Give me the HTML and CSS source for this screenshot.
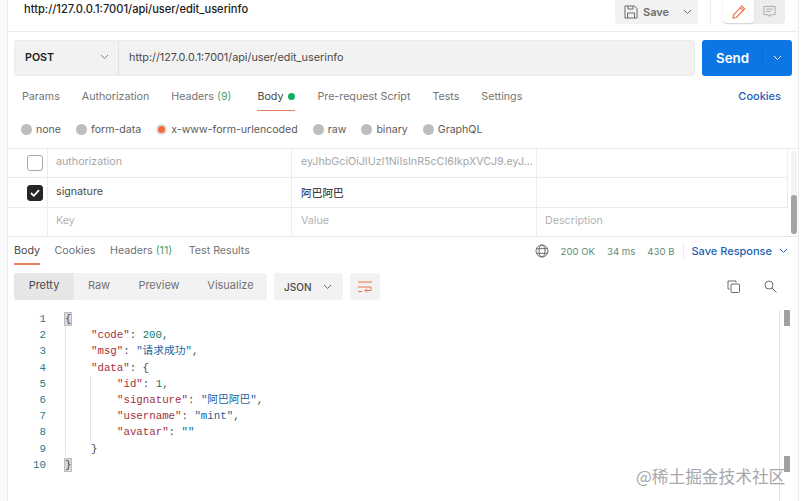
FILE: index.html
```html
<!DOCTYPE html>
<html lang="en">
<head>
<meta charset="utf-8">
<title>Postman</title>
<link rel="stylesheet" href="styles.css">
</head>
<body>
<div class="app">
  <header class="title-bar">
    <span class="title">http://127.0.0.1:7001/api/user/edit_userinfo</span>
    <div class="save">
      <svg width="14" height="14" viewBox="0 0 14 14" fill="none" stroke="#6b6b6b"><path d="M1 1h9.500L13 3.500V13H1z"/><path d="M3.500 13V8h7v5M4 1v3h5V1"/></svg>
      <span class="save-label">Save</span>
      <svg class="chev" width="9" height="6" viewBox="0 0 9 6" fill="none" stroke="#6b6b6b"><path d="M1 1l3.500 3.500L8 1"/></svg>
    </div>
    <span class="vsep"></span>
    <div class="mode">
      <span class="mode-on"><svg width="14" height="14" viewBox="0 0 14 14" fill="none" stroke="#e8734a" stroke-width="1.200"><path d="M1.500 9.800L9.800 1.200l2.800 2.800-8.300 8.500-3.200.5z"/><path d="M8.300 2.800l2.800 2.800"/></svg></span>
      <span class="mode-off"><svg width="14" height="14" viewBox="0 0 14 14" fill="none" stroke="#a6a6a6"><path d="M1 1.500h12v9H8l-1 2-1-2H1z"/><path d="M3.500 4.500h7M3.500 7h5"/></svg></span>
    </div>
  </header>

  <section class="url-row">
    <div class="url-box">
      <div class="method"><span>POST</span><svg width="9" height="6" viewBox="0 0 9 6" fill="none" stroke="#808080"><path d="M1 1l3.500 3.500L8 1"/></svg></div>
      <div class="url">http://127.0.0.1:7001/api/user/edit_userinfo</div>
    </div>
    <div class="send">
      <span class="send-label">Send</span>
      <span class="send-arrow"><svg width="9" height="6" viewBox="0 0 9 6" fill="none" stroke="#fff"><path d="M1 1l3.500 3.500L8 1"/></svg></span>
    </div>
  </section>

  <nav class="tabs req-tabs">
    <span class="tab">Params</span>
    <span class="tab">Authorization</span>
    <span class="tab">Headers <i class="count">(9)</i></span>
    <span class="tab active">Body <b class="dot"></b></span>
    <span class="tab">Pre-request Script</span>
    <span class="tab">Tests</span>
    <span class="tab">Settings</span>
    <span class="link cookies">Cookies</span>
  </nav>

  <div class="radios">
    <label class="radio"><b></b>none</label>
    <label class="radio"><b></b>form-data</label>
    <label class="radio on"><b></b>x-www-form-urlencoded</label>
    <label class="radio"><b></b>raw</label>
    <label class="radio"><b></b>binary</label>
    <label class="radio"><b></b>GraphQL</label>
  </div>

  <div class="params">
    <div class="table">
      <div class="row r1">
        <div class="c0"><span class="check"></span></div>
        <div class="c1 muted">authorization</div>
        <div class="c2 muted">eyJhbGciOiJIUzI1NiIsInR5cCI6IkpXVCJ9.eyJ...</div>
        <div class="c3"></div>
      </div>
      <div class="row r2">
        <div class="c0"><span class="check checked"><svg width="10" height="8" viewBox="0 0 10 8" fill="none" stroke="#fff" stroke-width="1.800"><path d="M1 4l2.800 2.800L9 1.200"/></svg></span></div>
        <div class="c1">signature</div>
        <div class="c2 cjk">阿巴阿巴</div>
        <div class="c3"></div>
      </div>
      <div class="row r3">
        <div class="c0"></div>
        <div class="c1 ph">Key</div>
        <div class="c2 ph">Value</div>
        <div class="c3 ph">Description</div>
      </div>
    </div>
    <div class="params-bar"><span class="params-thumb"></span></div>
  </div>

  <nav class="tabs res-tabs">
    <span class="tab active">Body</span>
    <span class="tab">Cookies</span>
    <span class="tab">Headers <i class="count">(11)</i></span>
    <span class="tab results">Test Results</span>
    <div class="status">
      <svg width="14" height="14" viewBox="0 0 14 14" fill="none" stroke="#6b6b6b"><circle cx="7" cy="7" r="6"/><ellipse cx="7" cy="7" rx="3" ry="6"/><path d="M1.500 4.700h11M1.500 9.300h11"/></svg>
      <span class="stat">200 OK</span>
      <span class="stat">34 ms</span>
      <span class="stat">430 B</span>
      <span class="stat-sep"></span>
      <span class="link">Save Response</span>
      <svg width="9" height="6" viewBox="0 0 9 6" fill="none" stroke="#1d5fb5"><path d="M1 1l3.500 3.500L8 1"/></svg>
    </div>
  </nav>

  <div class="toolbar">
    <div class="views">
      <span class="view sel">Pretty</span>
      <span class="view">Raw</span>
      <span class="view">Preview</span>
      <span class="view">Visualize</span>
    </div>
    <div class="lang"><span>JSON</span><svg width="9" height="6" viewBox="0 0 9 6" fill="none" stroke="#6b6b6b"><path d="M1 1l3.500 3.500L8 1"/></svg></div>
    <div class="wrap"><svg width="14" height="12" viewBox="0 0 14 12" fill="none" stroke="#e8734a"><path d="M0 1h14M0 6h13v3.500H7M9 7.500L7 9.500l2 2M0 10.500h4"/></svg></div>
    <div class="tools">
      <svg width="13" height="13" viewBox="0 0 13 13" fill="none" stroke="#6b6b6b"><rect x="4" y="4" width="8.500" height="8.500" rx="1"/><path d="M2.500 9H1V1h8v1.500"/></svg>
      <svg width="13" height="13" viewBox="0 0 13 13" fill="none" stroke="#6b6b6b"><circle cx="5" cy="5" r="4"/><path d="M8 8l4.500 4.500"/></svg>
    </div>
  </div>

  <div class="code-area">
    <div class="gutter">
      <div>1</div><div>2</div><div>3</div><div>4</div><div>5</div><div>6</div><div>7</div><div>8</div><div>9</div><div>10</div>
    </div>
    <div class="code">
      <div class="line"><span class="match">{</span></div>
      <div class="line i1"><span class="k">"code"</span>: <span class="n">200</span>,</div>
      <div class="line i1"><span class="k">"msg"</span>: <span class="s">"请求成功"</span>,</div>
      <div class="line i1"><span class="k">"data"</span>: {</div>
      <div class="line i2"><span class="k">"id"</span>: <span class="n">1</span>,</div>
      <div class="line i2"><span class="k">"signature"</span>: <span class="s">"阿巴阿巴"</span>,</div>
      <div class="line i2"><span class="k">"username"</span>: <span class="s">"mint"</span>,</div>
      <div class="line i2"><span class="k">"avatar"</span>: <span class="s">""</span></div>
      <div class="line i1">}</div>
      <div class="line"><span class="match">}</span></div>
    </div>
    <span class="guide g1"></span>
    <span class="guide g2"></span>
    <span class="code-bar"><i class="t1"></i><i class="t2"></i></span>
  </div>
  <div class="watermark">@稀土掘金技术社区</div>
</div>
</body>
</html>
```

FILE: styles.css
```css
* { box-sizing: border-box; }
html, body { margin: 0; padding: 0; }
body { width: 802px; height: 501px; overflow: hidden; background: #fff; font-family: Inter, "Noto Sans CJK SC", sans-serif; font-size: 10.7px; color: #6b6b6b; }
.app { position: relative; width: 799px; height: 501px; margin: 0; padding-left: 7px; border-right: 1px solid #ececec; background: #fff; }
.app::before { content: ""; position: absolute; left: 0; top: 0; bottom: 0; width: 7px; background: #f9f9f9; border-right: 1px solid #ececec; }

.title-bar { display: flex; align-items: flex-start; height: 32px; border-bottom: 1px solid #ececec; padding-left: 17px; }
.title { color: #212121; font-size: 11.100px; font-weight: 500; line-height: 18px; flex: 1; }
.save { display: flex; align-items: center; width: 83px; height: 24px; background: #f2f2f2; padding-left: 9px; border-radius: 0 0 3px 3px; }
.save-label { margin-left: 5px; font-size: 11px; font-weight: 600; color: #6b6b6b; flex: 1; }
.chev { margin-right: 6px; }
.vsep { width: 1px; height: 24px; background: #ececec; margin: 0 12px; }
.mode { display: flex; width: 62px; height: 24px; background: #ededed; border-radius: 0 0 4px 4px; margin-right: 13px; }
.mode-on, .mode-off { display: flex; align-items: center; justify-content: center; width: 31px; height: 23px; }
.mode-on { background: #fff; border-radius: 0 0 4px 4px; box-shadow: 0 1px 2px rgba(0,0,0,.12); }
.mode-off svg { width: 13px; height: 13px; }

.url-row { display: flex; height: 36px; margin: 8px 6px 0 7px; gap: 7px; }
.url-box { display: flex; flex: 1; background: #f2f2f2; border: 1px solid #ebebeb; border-radius: 3px; align-items: center; height: 36px; }
.method { display: flex; align-items: center; justify-content: space-between; width: 104px; height: 100%; padding: 0 9px 2px 10px; border-right: 1px solid #e4e4e4; color: #212121; font-size: 10.700px; font-weight: 600; }
.url { padding: 0 0 2px 10px; color: #4a4a4a; font-size: 10.850px; }
.send { display: flex; width: 90px; height: 36px; background: #0b76e4; border-radius: 3px; color: #fff; align-items: center; }
.send-label { width: 60px; padding: 0 0 1px 1px; text-align: center; font-size: 13.300px; font-weight: 600; }
.send-arrow { display: flex; flex: 1; height: 24px; align-items: center; justify-content: center; border-left: 1px solid #0a6ed6; }

.tabs { display: flex; align-items: center; }
.tab { color: #737373; position: relative; font-size: 10.700px; white-space: nowrap; }
.tab.active { color: #4a4a4a; }
.tab.active::after { content: ""; position: absolute; left: 0; right: 0; height: 1.500px; background: #e8815a; }
.count { font-style: normal; color: #4c9f70; }
.link { color: #1d5fb5; font-size: 11px; font-weight: 500; }
.req-tabs { height: 30px; margin-top: 5px; padding-left: 15px; gap: 22px; position: relative; }
.req-tabs .tab.active { margin-left: 4px; }
.req-tabs .tab.active::after { bottom: 0; }
.req-tabs .tab { line-height: 28px; padding-top: 2px; }
.dot { display: inline-block; width: 7px; height: 7px; border-radius: 50%; background: #10b05e; margin-left: 2px; }
.cookies { margin-left: auto; margin-right: 17px; }

.radios { display: flex; align-items: center; height: 37px; padding-left: 14px; gap: 15px; }
.radio { display: flex; align-items: center; color: #5c5c5c; font-size: 10.600px; }
.radio b { width: 11px; height: 11px; border-radius: 50%; background: #bdbdbd; margin-right: 4px; }
.radio.on b { background: #f26b3a; border: 2px solid #dedede; }

.params { display: flex; height: 89px; border-top: 1px solid #ececec; border-bottom: 1px solid #e6e6e6; position: relative; }
.table { width: 781px; flex: none; }
.row { display: flex; height: 30px; border-bottom: 1px solid #ececec; align-items: center; }
.r1 { height: 29px; }
.r3 { border-bottom: 0; height: 28px; }
.c0 { width: 41px; height: 100%; border-right: 1px solid #ececec; padding-left: 20px; display: flex; align-items: center; flex: none; }
.c1, .c2, .c3 { height: 100%; display: flex; align-items: center; padding: 0 0 3px 8px; border-right: 1px solid #ececec; white-space: nowrap; overflow: hidden; font-size: 10.700px; color: #4a4a4a; }
.c1 { width: 244px; }
.c2 { width: 245px; padding-left: 9px; }
.c3 { flex: 1; }
.r3 .c3 { border-right: 0; }
.muted { color: #a6a6a6; }
.ph { color: #b3b3b3; }
.cjk { color: #212121; padding-bottom: 1px; }
.check { display: flex; align-items: center; justify-content: center; width: 16px; height: 16px; border: 1px solid #a8a8a8; border-radius: 3px; background: #fff; }
.checked { background: #262626; border-color: #262626; }
.params-bar { width: 10px; position: relative; }
.params-bar::before { content: ""; position: absolute; left: 3px; top: 2px; bottom: 1px; width: 6px; border-radius: 3px; background: #f3f3f3; }
.params-thumb { position: absolute; left: 3px; top: 46px; width: 6px; height: 39px; border-radius: 3px; background: #a3a3a3; }

.res-tabs { height: 28px; padding-left: 7px; gap: 14.500px; }
.res-tabs .tab { line-height: 25px; padding-bottom: 2px; }
.res-tabs .tab.active::after { bottom: 0; }
.res-tabs .results { margin-left: 2px; }
.status { display: flex; align-items: center; margin-left: auto; margin-right: 10px; }
.stat { font-size: 9.600px; margin-left: 12px; color: #5f8a76; }
.stat-sep { width: 1px; height: 16px; background: #ececec; margin: 0 8px; }
.status > svg:last-child { margin-left: 7px; }

.toolbar { display: flex; align-items: center; height: 27px; margin-top: 8px; padding-left: 7px; }
.views { display: flex; width: 253px; height: 27px; background: #f2f2f2; border-radius: 3px; align-items: center; }
.view { display: flex; align-items: center; justify-content: center; height: 100%; color: #737373; font-size: 11px; padding: 0 0 3px; }
.view.sel { background: #e6e6e6; color: #4a4a4a; width: 60px; border-radius: 3px 0 0 3px; }
.view:nth-child(2) { width: 50px; }
.view:nth-child(3) { width: 70px; }
.view:nth-child(4) { width: 73px; }
.lang { display: flex; align-items: center; justify-content: space-between; width: 69px; height: 27px; margin-left: 7px; background: #f2f2f2; border-radius: 3px; padding: 0 11px 0 10px; color: #4a4a4a; font-size: 10px; font-weight: 500; }
.wrap { display: flex; align-items: center; justify-content: center; width: 30px; height: 27px; margin-left: 7px; background: #f2f2f2; border-radius: 3px; }
.tools { display: flex; align-items: center; gap: 24px; margin-left: auto; margin-right: 21px; }

.code-area { position: relative; display: flex; height: 190px; margin-top: 11px; padding-top: 0; }
.gutter { width: 39px; text-align: right; color: #2a7a87; font-family: "Liberation Mono", monospace; font-size: 10.750px; line-height: 16.200px; }
.code { margin: 0 0 0 19px; color: #4a4a4a; font-family: "Liberation Mono", "Noto Sans CJK SC", monospace; font-size: 10.750px; line-height: 16.200px; }
.line { white-space: pre; height: 16.200px; }
.i1 { padding-left: 26px; }
.i2 { padding-left: 52px; }
.k { color: #a3303f; }
.s { color: #1c5f9e; }
.n { color: #0f7a66; }
.match { background: #d9d9d9; outline: 1px solid #bdbdbd; }
.guide { position: absolute; width: 1px; background: #e3e3e3; }
.g1 { left: 58px; top: 14px; height: 130px; }
.g2 { left: 83px; top: 65px; height: 65px; }
.code-bar { position: absolute; left: 772px; top: -1px; width: 12px; height: 191px; border-left: 1px solid #e3e3e3; }
.code-bar i { position: absolute; left: 4px; width: 6px; background: #a0a0a0; }
.code-bar .t1 { top: 0; height: 16px; }
.code-bar .t2 { top: 146px; height: 16px; }
.watermark { position: absolute; left: 636px; top: 464px; color: #a8a8a8; font-size: 16.700px; line-height: 24px; font-family: "Noto Sans CJK SC", sans-serif; white-space: nowrap; }
```
